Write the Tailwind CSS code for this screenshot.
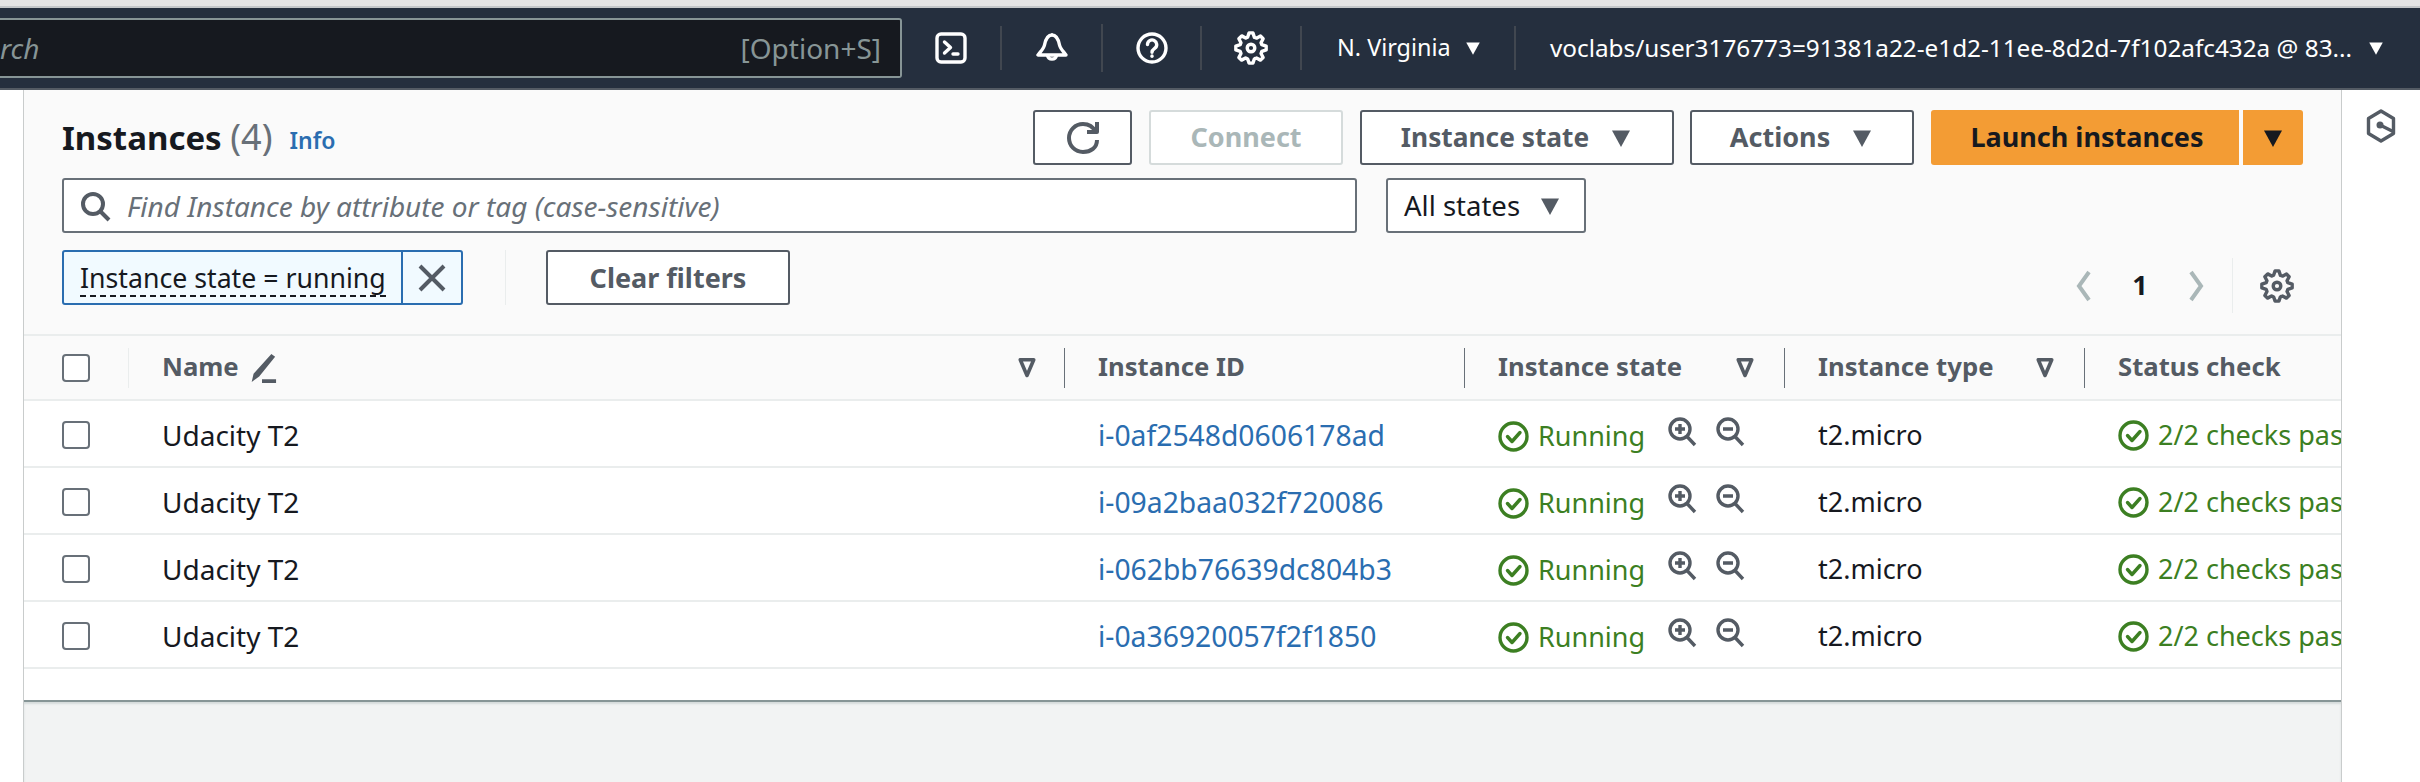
<!DOCTYPE html>
<html lang="en">
<head>
<meta charset="utf-8">
<title>Instances</title>
<script src="https://cdn.jsdelivr.net/npm/@tailwindcss/browser@4"></script>
</head>
<body class="font-['Noto_Sans',sans-serif] bg-white">
<div class="w-[2420px] h-[782px] overflow-hidden flex flex-col">
  <!-- browser edge -->
  <div class="h-[8px] bg-[#e4e4e4] border-b-2 border-[#c4c7c9]"></div>

  <!-- top nav -->
  <header class="h-[82px] shrink-0 bg-[#252f3e] border-b-2 border-[#545b64] flex items-center text-white">
    <div class="w-[902px] h-[60px] bg-[#16191f] border-2 border-l-0 border-[#879596] rounded-r-[3px] flex items-center justify-between pr-[19px] text-[#879596] text-[28px]">
      <span class="italic">rch</span>
      <span>[Option+S]</span>
    </div>
    <div class="w-[100px] h-[44px] border-r-2 border-[#414750] flex items-center justify-center">
      <svg class="w-[32px] h-[32px]" viewBox="0 0 32 32" fill="none" stroke="currentColor" stroke-width="3.4" stroke-linecap="round" stroke-linejoin="round"><rect x="2" y="2" width="28" height="28" rx="4"/><path d="M9.5 10l6 5.5-6 5.5M18 22h5"/></svg>
    </div>
    <div class="w-[101px] h-[48px] border-r-2 border-[#414750] flex items-center justify-center">
      <svg class="w-[32px] h-[32px]" viewBox="0 0 32 32" fill="none" stroke="currentColor" stroke-width="3.4" stroke-linejoin="round"><path d="M16 3c-5 0-6.500 5-7.500 10-.7 3.500-3.500 6-6.500 10h28c-3-4-5.800-6.500-6.500-10C22.500 8 21 3 16 3z"/><path d="M11.500 23.500a4.600 4.600 0 0 0 9 0"/><circle cx="16" cy="2.500" r="1.200" fill="currentColor" stroke="none"/></svg>
    </div>
    <div class="w-[99px] h-[44px] border-r-2 border-[#414750] flex items-center justify-center">
      <svg class="w-[32px] h-[32px]" viewBox="0 0 32 32" fill="none" stroke="currentColor" stroke-width="3.4" stroke-linecap="round"><circle cx="16" cy="16" r="14"/><path d="M11.500 12.500a4.600 4.600 0 1 1 7.400 3.700c-1.700 1.300-2.900 2.100-2.900 4"/><path d="M16 24v.2"/></svg>
    </div>
    <div class="w-[100px] h-[44px] border-r-2 border-[#414750] flex items-center justify-center">
      <svg class="w-[36px] h-[36px]" viewBox="-1.500 -1.500 19 19" fill="none" stroke="currentColor" stroke-width="1.800" stroke-linejoin="round"><path d="M13.300 5.200l1.100-2.100L13 1.700l-2.100 1.100c-.3-.2-.7-.3-1.100-.4L9 0H7l-.8 2.300c-.3.100-.7.200-1 .4L3.100 1.600 1.600 3.100l1.100 2.100c-.2.300-.3.700-.4 1L0 7v2l2.300.8c.1.400.3.700.4 1.100l-1.100 2.100 1.400 1.400 2.100-1.100c.3.200.7.300 1.100.4L7 16h2l.8-2.300c.4-.1.700-.3 1.100-.4l2.100 1.100 1.400-1.400-1.100-2.100c.2-.3.300-.7.400-1.100L16 9V7l-2.300-.8c-.1-.3-.2-.7-.4-1z"/><circle cx="8" cy="8" r="2"/></svg>
    </div>
    <div class="w-[214px] h-[44px] border-r-2 border-[#414750] flex items-center pl-[35px] gap-[13px] text-[23.400px]">
      <span>N. Virginia</span>
      <svg class="w-[18px] h-[18px]" viewBox="0 0 16 16" fill="currentColor"><path d="M2 3h12l-6 11z"/></svg>
    </div>
    <div class="flex items-center pl-[34px] gap-[15px] text-[24.300px] whitespace-nowrap">
      <span>voclabs/user3176773=91381a22-e1d2-11ee-8d2d-7f102afc432a @ 83...</span>
      <svg class="w-[18px] h-[18px]" viewBox="0 0 16 16" fill="currentColor"><path d="M2 3h12l-6 11z"/></svg>
    </div>
  </header>

  <div class="flex-1 flex min-h-0">
    <main class="ml-[23px] w-[2319px] border-x border-[#c9cccc] flex flex-col overflow-hidden">
      <!-- toolbar -->
      <section class="h-[246px] shrink-0 bg-[#fafafa] border-b-2 border-[#eaeded] pt-[20px] pl-[38px] pr-[38px]">
        <div class="flex items-center h-[55px]">
          <h1 class="text-[33px] mb-[2px] font-bold text-[#16191f] whitespace-nowrap">Instances <span class="font-normal text-[36px] text-[#687078]">(4)</span></h1>
          <a class="ml-[17px] mt-[5px] text-[23px] font-semibold text-[#2a6db0]">Info</a>
          <button class="ml-auto w-[99px] h-[55px] bg-white border-2 border-[#545b64] rounded-[3px] flex items-center justify-center text-[#545b64]">
            <svg class="w-[32px] h-[32px]" viewBox="0 0 16 16" fill="none" stroke="currentColor" stroke-width="2"><path d="M10 5h5V0" stroke-linejoin="round"/><path d="M15 9c0 3.900-3.100 6-7 6s-7-3.100-7-7 3.100-7 7-7c2.800 0 5.200 1.600 6.300 4"/></svg>
          </button>
          <button class="ml-[17px] w-[194px] h-[55px] bg-white border-2 border-[#d5dbdb] rounded-[3px] text-[27px] font-bold text-[#aab7b8]">Connect</button>
          <button class="ml-[17px] w-[314px] h-[55px] bg-white border-2 border-[#545b64] rounded-[3px] text-[26.300px] font-bold text-[#545b64] flex items-center justify-center gap-[20px]">
            Instance state
            <svg class="w-[24px] h-[24px]" viewBox="0 0 16 16" fill="currentColor"><path d="M2 3h12l-6 11z"/></svg>
          </button>
          <button class="ml-[16px] w-[224px] h-[55px] bg-white border-2 border-[#545b64] rounded-[3px] text-[27px] font-bold text-[#545b64] flex items-center justify-center gap-[20px]">
            Actions
            <svg class="w-[24px] h-[24px]" viewBox="0 0 16 16" fill="currentColor"><path d="M2 3h12l-6 11z"/></svg>
          </button>
          <button class="ml-[17px] w-[308px] h-[55px] pl-[4px] bg-[#f39c34] rounded-l-[3px] text-[27px] font-bold text-[#16191f]">Launch instances</button>
          <button class="ml-[4px] w-[60px] h-[55px] bg-[#f39c34] rounded-r-[3px] flex items-center justify-center text-[#16191f]">
            <svg class="w-[24px] h-[24px]" viewBox="0 0 16 16" fill="currentColor"><path d="M2 3h12l-6 11z"/></svg>
          </button>
        </div>

        <div class="mt-[13px] flex">
          <div class="w-[1295px] h-[55px] bg-white border-2 border-[#687078] rounded-[3px] flex items-center pl-[15px] gap-[16px] text-[#687078]">
            <svg class="w-[32px] h-[32px]" viewBox="0 0 16 16" fill="none" stroke="#545b64" stroke-width="2"><circle cx="7" cy="7" r="5"/><path d="M15 15l-4.500-4.500"/></svg>
            <span class="italic text-[28px]">Find Instance by attribute or tag (case-sensitive)</span>
          </div>
          <button class="ml-[29px] w-[200px] h-[55px] bg-white border-2 border-[#687078] rounded-[3px] flex items-center pl-[16px] gap-[18px] text-[27.500px] text-[#16191f]">
            All states
            <svg class="w-[24px] h-[24px] text-[#545b64]" viewBox="0 0 16 16" fill="currentColor"><path d="M2 3h12l-6 11z"/></svg>
          </button>
        </div>

        <div class="mt-[17px] flex items-start">
          <div class="w-[401px] h-[55px] bg-[#f1faff] border-2 border-[#2a6db0] rounded-[3px] flex text-[#16191f]">
            <div class="w-[339px] border-r-2 border-[#2a6db0] flex items-center pl-[16px] pt-[2px]">
              <span class="text-[26.700px] leading-[34px] border-b-2 border-dashed border-[#16191f] whitespace-nowrap">Instance state = running</span>
            </div>
            <div class="flex-1 flex items-center justify-center text-[#545b64]">
              <svg class="w-[32px] h-[32px]" viewBox="0 0 16 16" fill="none" stroke="currentColor" stroke-width="2"><path d="M2 2l12 12M14 2L2 14"/></svg>
            </div>
          </div>
          <div class="ml-[42px] w-px h-[55px] bg-[#eaeded]"></div>
          <button class="ml-[40px] w-[244px] h-[55px] pt-[1px] bg-white border-2 border-[#545b64] rounded-[3px] text-[27px] font-bold text-[#545b64]">Clear filters</button>
          <div class="ml-auto mt-[8px] mr-[8px] flex items-center h-[55px]">
            <svg class="w-[32px] h-[32px] text-[#aab7b8]" viewBox="0 0 16 16" fill="none" stroke="currentColor" stroke-width="2"><path d="M10 1L5 8l5 7"/></svg>
            <span class="w-[78px] text-center text-[27px] font-bold text-[#16191f]">1</span>
            <svg class="w-[32px] h-[32px] text-[#aab7b8]" viewBox="0 0 16 16" fill="none" stroke="currentColor" stroke-width="2"><path d="M6 1l5 7-5 7"/></svg>
            <div class="ml-[21px] w-px h-[55px] bg-[#eaeded]"></div>
            <svg class="ml-[26px] w-[36px] h-[36px] text-[#545b64]" viewBox="-1.500 -1.500 19 19" fill="none" stroke="currentColor" stroke-width="1.800" stroke-linejoin="round"><path d="M13.300 5.200l1.100-2.100L13 1.700l-2.100 1.100c-.3-.2-.7-.3-1.100-.4L9 0H7l-.8 2.300c-.3.100-.7.200-1 .4L3.100 1.600 1.600 3.100l1.100 2.100c-.2.300-.3.700-.4 1L0 7v2l2.300.8c.1.400.3.700.4 1.100l-1.100 2.100 1.400 1.400 2.100-1.100c.3.200.7.300 1.100.4L7 16h2l.8-2.300c.4-.1.700-.3 1.100-.4l2.100 1.100 1.400-1.400-1.100-2.100c.2-.3.300-.7.400-1.100L16 9V7l-2.300-.8c-.1-.3-.2-.7-.4-1z"/><circle cx="8" cy="8" r="2"/></svg>
          </div>
        </div>
      </section>

      <!-- table header -->
      <div class="h-[65px] shrink-0 bg-[#fafafa] border-b-2 border-[#eaeded] grid grid-cols-[105px_936px_400px_320px_300px_256px] items-center text-[25.700px] font-bold text-[#545b64] whitespace-nowrap">
        <div class="h-[40px] border-r border-[#eaeded] pl-[38px] flex items-center">
          <span class="w-[28px] h-[28px] bg-white border-2 border-[#687078] rounded-[4px]"></span>
        </div>
        <div class="h-[40px] border-r border-[#687078] pl-[33px] pr-[25px] flex items-center gap-[8px]">
          Name
          <svg class="w-[30px] h-[30px]" viewBox="0 0 16 16" fill="currentColor"><path d="M13 .5l2 1.500-8.500 10.500-4 3 1-4.500zM8 14h7.500v2H8z"/></svg>
          <svg class="ml-auto w-[24px] h-[24px]" viewBox="0 0 16 16" fill="none" stroke="currentColor" stroke-width="2.400" stroke-linejoin="round"><path d="M3.500 2.500h9L8 13z"/></svg>
        </div>
        <div class="h-[40px] border-r border-[#687078] pl-[33px] flex items-center">Instance ID</div>
        <div class="h-[40px] border-r border-[#687078] pl-[33px] pr-[27px] flex items-center justify-between">
          Instance state
          <svg class="w-[24px] h-[24px]" viewBox="0 0 16 16" fill="none" stroke="currentColor" stroke-width="2.400" stroke-linejoin="round"><path d="M3.500 2.500h9L8 13z"/></svg>
        </div>
        <div class="h-[40px] border-r border-[#687078] pl-[33px] pr-[27px] flex items-center justify-between">
          Instance type
          <svg class="w-[24px] h-[24px]" viewBox="0 0 16 16" fill="none" stroke="currentColor" stroke-width="2.400" stroke-linejoin="round"><path d="M3.500 2.500h9L8 13z"/></svg>
        </div>
        <div class="h-[40px] pl-[33px] flex items-center">Status check</div>
      </div>

      <!-- rows -->
      <div class="h-[67px] pt-[3px] shrink-0 bg-white border-b-2 border-[#eaeded] grid grid-cols-[105px_936px_400px_320px_300px_256px] items-center text-[27px] text-[#16191f] whitespace-nowrap">
        <div class="pl-[38px] flex"><span class="w-[28px] h-[28px] border-2 border-[#687078] rounded-[4px]"></span></div>
        <div class="pl-[33px] text-[28px]">Udacity T2</div>
        <a class="pl-[33px] text-[28.300px] text-[#2a6db0]">i-0af2548d0606178ad</a>
        <div class="pl-[33px] flex items-center text-[#3c7f22]">
          <svg class="w-[31px] h-[31px] mt-[3px]" viewBox="0 0 31 31" fill="none" stroke="currentColor" stroke-width="3.400" stroke-linecap="round" stroke-linejoin="round"><circle cx="15.500" cy="15.500" r="13.500"/><path d="M9.500 15.500l4.500 5 8-9"/></svg>
          <span class="ml-[9px] mt-[3px]">Running</span>
          <svg class="ml-[22px] mb-[6px] w-[30px] h-[30px] text-[#545b64]" viewBox="0 0 30 30" fill="none" stroke="currentColor" stroke-width="3.400"><circle cx="13" cy="12" r="10"/><path d="M20 19.500l8 8.500M13 7v10M8 12h10"/></svg>
          <svg class="ml-[18px] mb-[6px] w-[30px] h-[30px] text-[#545b64]" viewBox="0 0 30 30" fill="none" stroke="currentColor" stroke-width="3.400"><circle cx="13" cy="12" r="10"/><path d="M20 19.500l8 8.500M8 12h10"/></svg>
        </div>
        <div class="pl-[33px]">t2.micro</div>
        <div class="pl-[33px] flex items-center text-[#3c7f22]">
          <svg class="w-[31px] h-[31px] shrink-0" viewBox="0 0 31 31" fill="none" stroke="currentColor" stroke-width="3.400" stroke-linecap="round" stroke-linejoin="round"><circle cx="15.500" cy="15.500" r="13.500"/><path d="M9.500 15.500l4.500 5 8-9"/></svg>
          <span class="ml-[9px]">2/2 checks passed</span>
        </div>
      </div>
      <div class="h-[67px] pt-[3px] shrink-0 bg-white border-b-2 border-[#eaeded] grid grid-cols-[105px_936px_400px_320px_300px_256px] items-center text-[27px] text-[#16191f] whitespace-nowrap">
        <div class="pl-[38px] flex"><span class="w-[28px] h-[28px] border-2 border-[#687078] rounded-[4px]"></span></div>
        <div class="pl-[33px] text-[28px]">Udacity T2</div>
        <a class="pl-[33px] text-[28.300px] text-[#2a6db0]">i-09a2baa032f720086</a>
        <div class="pl-[33px] flex items-center text-[#3c7f22]">
          <svg class="w-[31px] h-[31px] mt-[3px]" viewBox="0 0 31 31" fill="none" stroke="currentColor" stroke-width="3.400" stroke-linecap="round" stroke-linejoin="round"><circle cx="15.500" cy="15.500" r="13.500"/><path d="M9.500 15.500l4.500 5 8-9"/></svg>
          <span class="ml-[9px] mt-[3px]">Running</span>
          <svg class="ml-[22px] mb-[6px] w-[30px] h-[30px] text-[#545b64]" viewBox="0 0 30 30" fill="none" stroke="currentColor" stroke-width="3.400"><circle cx="13" cy="12" r="10"/><path d="M20 19.500l8 8.500M13 7v10M8 12h10"/></svg>
          <svg class="ml-[18px] mb-[6px] w-[30px] h-[30px] text-[#545b64]" viewBox="0 0 30 30" fill="none" stroke="currentColor" stroke-width="3.400"><circle cx="13" cy="12" r="10"/><path d="M20 19.500l8 8.500M8 12h10"/></svg>
        </div>
        <div class="pl-[33px]">t2.micro</div>
        <div class="pl-[33px] flex items-center text-[#3c7f22]">
          <svg class="w-[31px] h-[31px] shrink-0" viewBox="0 0 31 31" fill="none" stroke="currentColor" stroke-width="3.400" stroke-linecap="round" stroke-linejoin="round"><circle cx="15.500" cy="15.500" r="13.500"/><path d="M9.500 15.500l4.500 5 8-9"/></svg>
          <span class="ml-[9px]">2/2 checks passed</span>
        </div>
      </div>
      <div class="h-[67px] pt-[3px] shrink-0 bg-white border-b-2 border-[#eaeded] grid grid-cols-[105px_936px_400px_320px_300px_256px] items-center text-[27px] text-[#16191f] whitespace-nowrap">
        <div class="pl-[38px] flex"><span class="w-[28px] h-[28px] border-2 border-[#687078] rounded-[4px]"></span></div>
        <div class="pl-[33px] text-[28px]">Udacity T2</div>
        <a class="pl-[33px] text-[28.300px] text-[#2a6db0]">i-062bb76639dc804b3</a>
        <div class="pl-[33px] flex items-center text-[#3c7f22]">
          <svg class="w-[31px] h-[31px] mt-[3px]" viewBox="0 0 31 31" fill="none" stroke="currentColor" stroke-width="3.400" stroke-linecap="round" stroke-linejoin="round"><circle cx="15.500" cy="15.500" r="13.500"/><path d="M9.500 15.500l4.500 5 8-9"/></svg>
          <span class="ml-[9px] mt-[3px]">Running</span>
          <svg class="ml-[22px] mb-[6px] w-[30px] h-[30px] text-[#545b64]" viewBox="0 0 30 30" fill="none" stroke="currentColor" stroke-width="3.400"><circle cx="13" cy="12" r="10"/><path d="M20 19.500l8 8.500M13 7v10M8 12h10"/></svg>
          <svg class="ml-[18px] mb-[6px] w-[30px] h-[30px] text-[#545b64]" viewBox="0 0 30 30" fill="none" stroke="currentColor" stroke-width="3.400"><circle cx="13" cy="12" r="10"/><path d="M20 19.500l8 8.500M8 12h10"/></svg>
        </div>
        <div class="pl-[33px]">t2.micro</div>
        <div class="pl-[33px] flex items-center text-[#3c7f22]">
          <svg class="w-[31px] h-[31px] shrink-0" viewBox="0 0 31 31" fill="none" stroke="currentColor" stroke-width="3.400" stroke-linecap="round" stroke-linejoin="round"><circle cx="15.500" cy="15.500" r="13.500"/><path d="M9.500 15.500l4.500 5 8-9"/></svg>
          <span class="ml-[9px]">2/2 checks passed</span>
        </div>
      </div>
      <div class="h-[67px] pt-[3px] shrink-0 bg-white border-b-2 border-[#eaeded] grid grid-cols-[105px_936px_400px_320px_300px_256px] items-center text-[27px] text-[#16191f] whitespace-nowrap">
        <div class="pl-[38px] flex"><span class="w-[28px] h-[28px] border-2 border-[#687078] rounded-[4px]"></span></div>
        <div class="pl-[33px] text-[28px]">Udacity T2</div>
        <a class="pl-[33px] text-[28.300px] text-[#2a6db0]">i-0a36920057f2f1850</a>
        <div class="pl-[33px] flex items-center text-[#3c7f22]">
          <svg class="w-[31px] h-[31px] mt-[3px]" viewBox="0 0 31 31" fill="none" stroke="currentColor" stroke-width="3.400" stroke-linecap="round" stroke-linejoin="round"><circle cx="15.500" cy="15.500" r="13.500"/><path d="M9.500 15.500l4.500 5 8-9"/></svg>
          <span class="ml-[9px] mt-[3px]">Running</span>
          <svg class="ml-[22px] mb-[6px] w-[30px] h-[30px] text-[#545b64]" viewBox="0 0 30 30" fill="none" stroke="currentColor" stroke-width="3.400"><circle cx="13" cy="12" r="10"/><path d="M20 19.500l8 8.500M13 7v10M8 12h10"/></svg>
          <svg class="ml-[18px] mb-[6px] w-[30px] h-[30px] text-[#545b64]" viewBox="0 0 30 30" fill="none" stroke="currentColor" stroke-width="3.400"><circle cx="13" cy="12" r="10"/><path d="M20 19.500l8 8.500M8 12h10"/></svg>
        </div>
        <div class="pl-[33px]">t2.micro</div>
        <div class="pl-[33px] flex items-center text-[#3c7f22]">
          <svg class="w-[31px] h-[31px] shrink-0" viewBox="0 0 31 31" fill="none" stroke="currentColor" stroke-width="3.400" stroke-linecap="round" stroke-linejoin="round"><circle cx="15.500" cy="15.500" r="13.500"/><path d="M9.500 15.500l4.500 5 8-9"/></svg>
          <span class="ml-[9px]">2/2 checks passed</span>
        </div>
      </div>

      <div class="h-[31px] shrink-0 bg-white"></div>
      <div class="flex-1 bg-[#f2f3f3] border-t-2 border-[#879596] shadow-[inset_0_2px_2px_#d5dbdb]"></div>
    </main>

    <!-- right rail -->
    <aside class="flex-1 flex justify-center pt-[19px]">
      <svg class="w-[32px] h-[34px] text-[#545b64]" viewBox="0 0 32 34" fill="none" stroke="currentColor" stroke-width="3.400" stroke-linejoin="round"><path d="M16 2l12.500 7.500v15L16 32 3.500 24.500v-15z"/><circle cx="15" cy="16" r="3.500" fill="currentColor" stroke="none"/><path d="M15 16l13 6.500"/></svg>
    </aside>
  </div>
</div>
</body>
</html>
